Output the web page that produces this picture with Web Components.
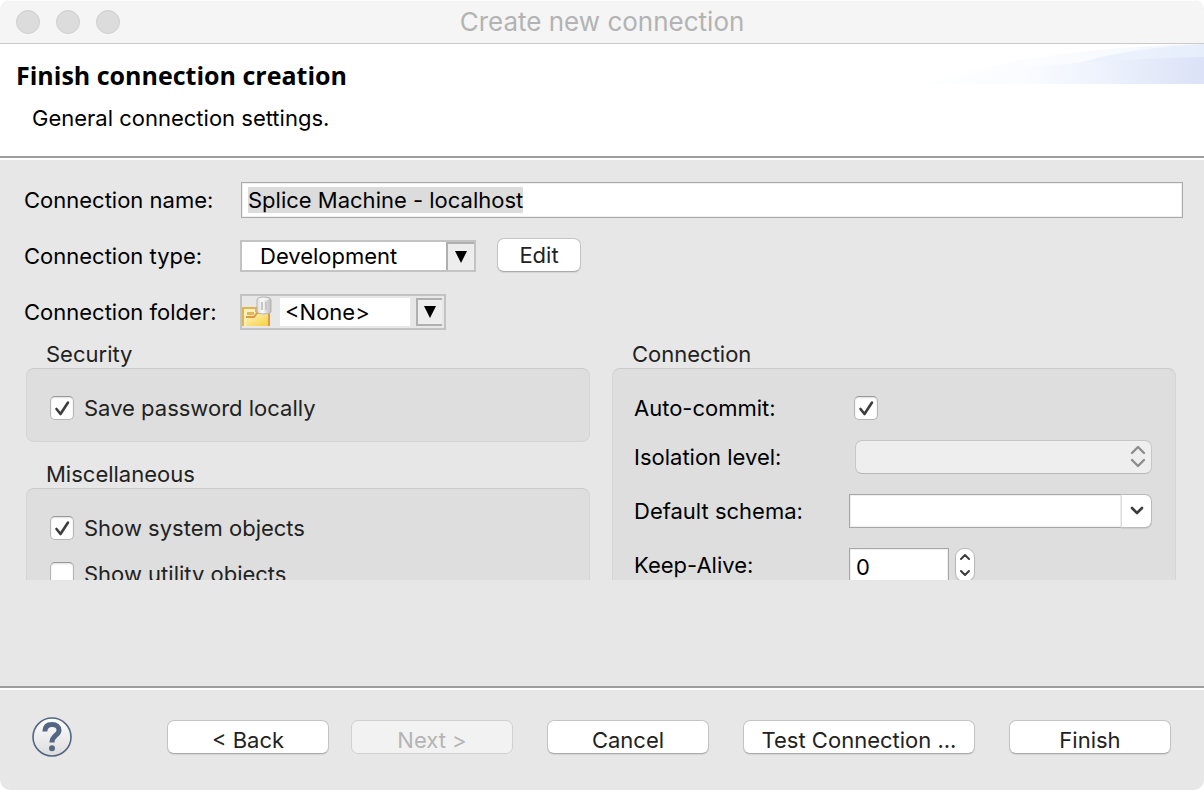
<!DOCTYPE html>
<html lang="en">
<head>
<meta charset="utf-8">
<title>Create new connection</title>
<style>
  body { margin: 0; background: #fff; font: 22px/28px Inter, "Liberation Sans", sans-serif; color: #000; }
</style>
</head>
<body>
<connection-wizard>
  <title-bar slot="title">Create new connection</title-bar>
  <wizard-header slot="header">
    Finish connection creation
    <span slot="description">General connection settings.</span>
  </wizard-header>

  <name-field></name-field>
  <type-field></type-field>
  <folder-field></folder-field>

  <settings-group slot="left" heading="Security">
    <check-option label="Save password locally" checked></check-option>
  </settings-group>
  <settings-group slot="left" heading="Miscellaneous">
    <check-option label="Show system objects" checked></check-option>
    <check-option label="Show utility objects"></check-option>
  </settings-group>
  <settings-group slot="right" heading="Connection">
    <connection-options></connection-options>
  </settings-group>

  <wizard-footer slot="footer">
    <push-button slot="steps">&lt; Back</push-button>
    <push-button slot="steps" disabled>Next &gt;</push-button>
    <push-button>Cancel</push-button>
    <push-button wide>Test Connection ...</push-button>
    <push-button>Finish</push-button>
  </wizard-footer>
</connection-wizard>

<template id="connection-wizard">
  <style>
    :host { display: flex; flex-direction: column; height: 100vh; box-sizing: border-box; background: #e7e7e7; border-radius: 10px; overflow: hidden; }
    main { flex: 1; min-height: 0; display: flex; flex-direction: column; padding: 22px 0 106px; box-sizing: border-box; }
    .fields { display: flex; flex-direction: column; gap: 20px; padding: 0 21px 0 24px; }
    .groups { flex: 1; min-height: 0; overflow: hidden; margin-top: 10px; padding: 0 28px 0 26px; display: grid; grid-template-columns: 1fr 1fr; gap: 22px; }
    .column { display: flex; flex-direction: column; gap: 18px; min-width: 0; }
  </style>
  <slot name="title"></slot>
  <slot name="header"></slot>
  <main>
    <div class="fields"><slot></slot></div>
    <div class="groups">
      <div class="column"><slot name="left"></slot></div>
      <div class="column"><slot name="right"></slot></div>
    </div>
  </main>
  <slot name="footer"></slot>
</template>

<template id="title-bar">
  <style>
    :host { display: grid; grid-template-columns: 1fr auto 1fr; align-items: center; height: 44px; padding: 0 16px; box-sizing: border-box; background: #f5f5f5; border-bottom: 1px solid #cacaca; box-shadow: inset 0 1px #fff; color: #b3b3b3; font-size: 26px; }
    .lights { display: flex; gap: 16px; }
    .lights i { width: 24px; height: 24px; box-sizing: border-box; border: 1px solid #cecece; border-radius: 50%; background: #dcdcdc; }
  </style>
  <div class="lights"><i></i><i></i><i></i></div>
  <span><slot></slot></span>
</template>

<template id="wizard-header">
  <style>
    :host { display: flex; justify-content: space-between; height: 112px; background: #fff; border-bottom: 2px solid #9d9d9d; box-shadow: 0 2px #fff; margin-bottom: 2px; }
    .text { padding: 17px 0 0 16px; }
    h1 { margin: 0; font: bold 25px/28px "Open Sans", "Noto Sans", sans-serif; }
    p { margin: 15px 0 0 16px; }
    svg { display: block; flex: none; }
  </style>
  <div class="text">
    <h1><slot></slot></h1>
    <p><slot name="description"></slot></p>
  </div>
  <svg width="280" height="40" viewBox="0 0 280 40" aria-hidden="true">
    <defs>
      <linearGradient id="a" x1="0" x2="1"><stop offset="0" stop-color="#fff"/><stop offset=".4" stop-color="#fbfcff"/><stop offset=".75" stop-color="#f6f9fe"/><stop offset="1" stop-color="#e8effc"/></linearGradient>
      <linearGradient id="b" x1="0" x2="1"><stop offset="0" stop-color="#fdfeff"/><stop offset=".35" stop-color="#fafcff"/><stop offset=".6" stop-color="#eff4fd"/><stop offset="1" stop-color="#dce2f7"/></linearGradient>
    </defs>
    <path d="M0 40Q110 4 280 0V40Z" fill="url(#a)"/>
    <path d="M155 19Q210 3 280 1V14Z" fill="#e4ecfb" opacity=".6"/>
    <path d="M0 40Q90 18 280 13V40Z" fill="url(#b)"/>
  </svg>
</template>

<template id="name-field">
  <style>
    :host { display: flex; align-items: center; height: 36px; }
    label { width: 217px; flex: none; }
    input { flex: 1; min-width: 0; height: 36px; box-sizing: border-box; padding: 0 6px; border: 1px solid #a9a9a9; border-radius: 0; box-shadow: inset 0 0 0 1px #f0f0f0; background: #fff; font: inherit; color: #000; outline: none; }
    input::selection { background: #dcdcdc; color: #000; }
  </style>
  <label for="name">Connection name:</label>
  <input id="name" type="text" value="Splice Machine - localhost">
</template>

<template id="type-field">
  <style>
    :host { display: flex; height: 36px; align-items: center; }
    label { width: 216px; flex: none; }
    .combo { display: flex; width: 236px; height: 32px; box-sizing: border-box; border: 2px solid #c3c3c3; background: #fff; margin-right: 21px; }
    select { appearance: none; flex: 1; min-width: 0; border: 0; padding: 0 18px; background: #fff; font: inherit; color: #000; outline: none; }
    .arrow { width: 28px; box-sizing: border-box; border: 2px solid #b0b0b0; border-width: 2px 0 0 2px; background: #ededed; display: flex; align-items: center; justify-content: center; }
    push-button { align-self: flex-start; }
  </style>
  <label for="type">Connection type:</label>
  <div class="combo">
    <select id="type"><option>Development</option></select>
    <span class="arrow"><svg width="12" height="12" viewBox="0 0 12 12"><path d="M0 0H12L6 12Z"/></svg></span>
  </div>
  <push-button small>Edit</push-button>
</template>

<template id="folder-field">
  <style>
    :host { display: flex; height: 36px; align-items: center; }
    label { width: 216px; flex: none; }
    .combo { display: flex; align-items: center; width: 206px; height: 36px; box-sizing: border-box; border: 2px solid #c3c3c3; padding-right: 2px; }
    select { appearance: none; flex: 1; min-width: 0; height: 28px; margin: 0 6px 0 8px; border: 0; padding: 0 5px; background: #fff; font: inherit; color: #000; outline: none; }
    .arrow { width: 26px; height: 28px; box-sizing: border-box; border: 2px solid #b0b0b0; border-right-width: 0; background: #ededed; display: flex; align-items: center; justify-content: center; }
  </style>
  <label for="folder">Connection folder:</label>
  <div class="combo">
    <svg width="30" height="32" viewBox="0 0 30 32" aria-hidden="true">
      <defs>
        <linearGradient id="f" x1="0" y1="0" x2="1" y2="1"><stop offset="0" stop-color="#fff3c4"/><stop offset="1" stop-color="#f6cf3a"/></linearGradient>
        <linearGradient id="c"><stop offset="0" stop-color="#dcdcdc"/><stop offset=".4" stop-color="#fafafa"/><stop offset="1" stop-color="#b9b9b9"/></linearGradient>
      </defs>
      <path d="M1 30V12H13V16H27V30Z" fill="#fdf0c0"/>
      <path d="M1 30V12H14V16" fill="none" stroke="#e0b44c" stroke-width="2"/>
      <path d="M5 16H12V19H5Z" fill="#e9b552"/>
      <path d="M4 30V22H12L15 18H27V30Z" fill="url(#f)"/>
      <path d="M4 21H12L15 17H27V30" fill="none" stroke="#dd9a3f" stroke-width="2"/>
      <path d="M15 4Q15 1 22 1T29 4V16Q28 18 22 18T15 16Z" fill="url(#c)" stroke="#b5b5b5"/>
      <ellipse cx="22" cy="3" rx="5" ry="1" fill="#f4f4f4"/>
      <path d="M20 6V14M24 6V14" stroke="#c6c6c6" stroke-width="2"/>
    </svg>
    <select id="folder"><option>&lt;None&gt;</option></select>
    <span class="arrow"><svg width="12" height="12" viewBox="0 0 12 12"><path d="M0 0H12L6 12Z"/></svg></span>
  </div>
</template>

<template id="settings-group">
  <style>
    :host { display: block; }
    fieldset { margin: 0; padding: 0; border: 0; min-width: 0; }
    legend { padding: 0 20px; height: 28px; color: #222; }
    .box { display: flex; flex-direction: column; gap: 22px; padding: 27px 23px 21px 21px; border: 1px solid #d4d4d4; border-top-color: #cbcbcb; border-radius: 8px; background: #dedede; }
  </style>
  <fieldset>
    <legend></legend>
    <div class="box"><slot></slot></div>
  </fieldset>
</template>

<template id="check-option">
  <style>
    :host { display: flex; padding-left: 2px; }
    label { display: flex; align-items: center; gap: 10px; height: 24px; color: #222; }
    .tick { display: grid; }
    .tick > * { grid-area: 1 / 1; }
    input { appearance: none; width: 24px; height: 24px; margin: 0; border: 1px solid #b4b4b4; border-top-color: #989898; border-radius: 5px; background: #fff; box-shadow: inset 0 1px 2px #ddd; }
    svg { pointer-events: none; visibility: hidden; }
    input:checked + svg { visibility: visible; }
  </style>
  <label>
    <span class="tick"><input type="checkbox"><svg width="24" height="24" viewBox="0 0 24 24"><path d="M6.500 13L10.500 18L18 6.500" fill="none" stroke="#3c3c3c" stroke-width="2.600" stroke-linecap="round" stroke-linejoin="round"/></svg></span>
    <span class="text"></span>
  </label>
</template>

<template id="connection-options">
  <style>
    :host { display: grid; grid-template-columns: 215px minmax(0, 1fr); row-gap: 20px; align-items: center; grid-auto-rows: 34px; grid-template-rows: 24px; padding-bottom: 20px; }
    input, select, button { font: inherit; color: #000; box-sizing: border-box; margin: 0; outline: none; }
    .tick { display: grid; justify-content: start; padding-left: 5px; }
    .tick > * { grid-area: 1 / 1; }
    .tick input { appearance: none; width: 24px; height: 24px; border: 1px solid #b4b4b4; border-top-color: #989898; border-radius: 5px; background: #fff; box-shadow: inset 0 1px 2px #ddd; }
    .tick svg { pointer-events: none; visibility: hidden; }
    .tick input:checked + svg { visibility: visible; }
    .popup { display: grid; align-items: center; padding-left: 6px; }
    .popup > * { grid-area: 1 / 1; }
    .popup select { appearance: none; width: 100%; height: 34px; border: 1px solid #c6c6c6; border-bottom-color: #b8b8b8; border-radius: 7px; background: #eee; opacity: 1; }
    .popup svg { justify-self: end; margin-right: 6px; pointer-events: none; }
    .field { height: 34px; border: 1px solid #a6a6a6; border-radius: 0; box-shadow: inset 0 0 0 1px #f0f0f0; background: #fff; padding: 4px 6px 0; }
    .combo { display: flex; }
    .combo input { flex: 1; min-width: 0; border-right: 0; }
    .combo button { width: 31px; height: 34px; padding: 0; border: 1px solid #b9b9b9; border-left-color: #dcdcdc; border-radius: 0 7px 7px 0; background: #fff; box-shadow: 0 1px 1px #ccc; display: grid; place-items: center; }
    .spin { display: flex; gap: 6px; }
    .spin input { width: 100px; }
    .stepper { display: flex; flex-direction: column; width: 20px; height: 34px; box-sizing: border-box; border: 1px solid #b9b9b9; border-radius: 9px; background: #fff; overflow: hidden; box-shadow: 0 1px 1px #ccc; }
    .stepper button { flex: 1; padding: 0; border: 0; background: none; display: grid; place-items: center; min-height: 0; }
    path { fill: none; stroke: #3c3c3c; stroke-width: 2.600; stroke-linecap: round; stroke-linejoin: round; }
    .stepper path { stroke-width: 2; }
    .popup path { stroke: #8c8c8c; stroke-width: 2.400; }
  </style>
  <label for="auto">Auto-commit:</label>
  <div class="tick"><input id="auto" type="checkbox" checked><svg width="24" height="24" viewBox="0 0 24 24"><path d="M6.500 13L10.500 18L18 6.500"/></svg></div>
  <label for="isolation">Isolation level:</label>
  <div class="popup"><select id="isolation" disabled></select><svg width="16" height="24" viewBox="0 0 16 24"><path d="M2 8L8 2L14 8M2 15L8 21L14 15"/></svg></div>
  <label for="schema">Default schema:</label>
  <div class="combo"><input class="field" id="schema" type="text"><button type="button" aria-label="Choose schema"><svg width="14" height="10" viewBox="0 0 14 10"><path d="M2 2L7 7L12 2"/></svg></button></div>
  <label for="alive">Keep-Alive:</label>
  <div class="spin">
    <input class="field" id="alive" type="text" value="0">
    <div class="stepper">
      <button type="button" aria-label="Increase"><svg width="12" height="8" viewBox="0 0 12 8"><path d="M2 6L6 2L10 6"/></svg></button>
      <button type="button" aria-label="Decrease"><svg width="12" height="8" viewBox="0 0 12 8"><path d="M2 2L6 6L10 2"/></svg></button>
    </div>
  </div>
</template>

<template id="wizard-footer">
  <style>
    :host { display: flex; align-items: center; justify-content: space-between; padding: 28px 33px 32px 32px; border-top: 2px solid #9d9d9d; box-shadow: inset 0 2px #fff; height: 42px; }
    .help { width: 40px; height: 40px; padding: 0; border: 0; background: none; display: block; }
    .buttons, .steps { display: flex; }
    .buttons { gap: 34px; }
    .steps { gap: 22px; }
    svg { display: block; }
  </style>
  <button class="help" type="button" aria-label="Help">
    <svg width="40" height="40" viewBox="0 0 40 40"><defs><linearGradient id="h" x2="0" y2="1"><stop offset="0" stop-color="#fff"/><stop offset="1" stop-color="#dcdcdc"/></linearGradient></defs><circle cx="20" cy="20" r="19" fill="url(#h)" stroke="#536684" stroke-width="1.600"/><path d="M12.800 14.500C13 9.500 16 7.500 20 7.500C24.500 7.500 27 9.800 27 13.200C27 18.500 20 18 20 25.500" fill="none" stroke="#536684" stroke-width="5"/><circle cx="20" cy="31.200" r="3" fill="#536684"/></svg>
  </button>
  <div class="buttons">
    <div class="steps"><slot name="steps"></slot></div>
    <slot></slot>
  </div>
</template>

<template id="push-button">
  <style>
    :host { display: block; width: 162px; }
    :host([wide]) { width: 232px; }
    :host([small]) { width: 84px; }
    button { display: block; width: 100%; height: 34px; box-sizing: border-box; padding: 6px 0 0; border: 1px solid #c4c4c4; border-bottom-color: #aaa; border-radius: 7px; background: #fff; box-shadow: 0 1px 1px #d4d4d4; font: inherit; line-height: 26px; color: #222; white-space: nowrap; }
    :host([small]) button { padding: 0; }
    button:disabled { background: #f2f2f2; color: #b4b4b4; border-color: #d0d0d0; box-shadow: none; }
  </style>
  <button type="button"><slot></slot></button>
</template>

<script>
  class TemplateElement extends HTMLElement {
    constructor() {
      super();
      this.attachShadow({ mode: "open" })
        .append(document.getElementById(this.localName).content.cloneNode(true));
    }
    $(selector) { return this.shadowRoot.querySelector(selector); }
  }
  for (const name of ["connection-wizard", "title-bar", "wizard-header", "type-field", "folder-field", "connection-options", "wizard-footer"]) {
    customElements.define(name, class extends TemplateElement {});
  }
  customElements.define("push-button", class extends TemplateElement {
    connectedCallback() { this.$("button").disabled = this.hasAttribute("disabled"); }
  });
  customElements.define("settings-group", class extends TemplateElement {
    connectedCallback() { this.$("legend").textContent = this.getAttribute("heading"); }
  });
  customElements.define("check-option", class extends TemplateElement {
    connectedCallback() {
      this.$(".text").textContent = this.getAttribute("label");
      this.$("input").checked = this.hasAttribute("checked");
    }
  });
  customElements.define("name-field", class extends TemplateElement {
    connectedCallback() {
      const input = this.$("input");
      input.focus();
      input.select();
    }
  });
</script>
</body>
</html>
